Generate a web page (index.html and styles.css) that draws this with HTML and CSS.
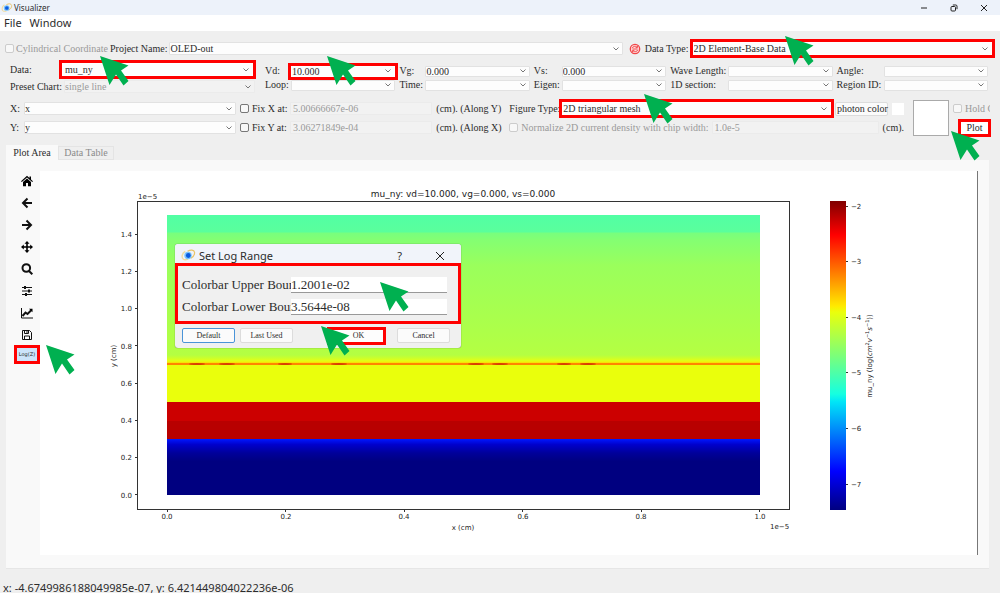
FILE: index.html
```html
<!DOCTYPE html>
<html lang="en">
<head>
<meta charset="utf-8">
<title>Visualizer</title>
<link rel="stylesheet" href="styles.css">
</head>
<body>
<svg class="defs" aria-hidden="true">
  <symbol id="arrow" viewBox="0 0 29 30"><path d="M0 0 28.500 9.500 21 14.500 28.500 25 23.500 29.500 16 18.500 9.500 29Z" fill="#00b050"/></symbol>
  <symbol id="logo" viewBox="0 0 16 14">
    <path d="M4.500 2.500C1 4.500 0 9 2.500 11c1.500 1 3.500.5 5-.2" fill="none" stroke="#f0dca0" stroke-width="1.500"/>
    <path d="M7 2.500c3-2 7-2 7.500 1 .3 2.500-1.500 5-4 6.500" fill="none" stroke="#e9c46a" stroke-width="1.300"/>
    <circle cx="7.500" cy="7" r="4" fill="#7cc4fa"/><circle cx="7.800" cy="7" r="2.600" fill="#0b5be0"/>
  </symbol>
</svg>

<header class="titlebar">
  <svg class="logo"><use href="#logo"/></svg>
  <span class="app-name">Visualizer</span>
  <div class="window-controls">
    <button aria-label="Minimize"><svg viewBox="0 0 8 8"><path d="M1 4h6"/></svg></button>
    <button aria-label="Restore"><svg viewBox="0 0 8 8"><rect x="1" y="2.500" width="4.500" height="4.500" rx="1"/><path d="M2.800 1h3q1.200 0 1.200 1.200v3"/></svg></button>
    <button aria-label="Close"><svg viewBox="0 0 8 8"><path d="M1 1l6 6M7 1 1 7"/></svg></button>
  </div>
</header>
<nav class="menubar"><button>File</button><button>Window</button></nav>

<form class="controls">
  <div class="row project-row">
    <label class="check muted anchor"><input type="checkbox" disabled>Cylindrical Coordinate<svg class="arrow a-data"><use href="#arrow"/></svg></label>
    <label for="project">Project Name:</label>
    <select id="project" class="field project"><option>OLED-out</option></select>
    <button type="button" class="refresh" aria-label="Refresh"><svg viewBox="0 0 12 12"><circle cx="6" cy="6" r="4.700" fill="#ffd9d9" stroke="#f0474a" stroke-width="1.300"/><path d="M3.200 5.200C3.700 3.300 6.500 2.700 8 4.100M8.500 2.700v1.900H6.600M8.800 6.800C8.300 8.700 5.500 9.300 4 7.900M3.500 9.300V7.400h1.900M3.500 6h5" fill="none" stroke="#f0474a" stroke-width=".9"/></svg></button>
    <label for="dtype">Data Type:</label>
    <div class="anchor dtype"><select id="dtype" class="field marked"><option>2D Element-Base Data</option></select><svg class="arrow a-dtype"><use href="#arrow"/></svg></div>
  </div>

  <div class="params">
    <div class="source">
      <label for="data">Data:</label>
      <select id="data" class="field marked inset"><option>mu_ny</option></select>
      <label for="preset">Preset Chart:</label>
      <select id="preset" class="field" disabled><option>single line</option></select>
    </div>
    <div class="bias">
      <label for="vd">Vd:</label><div class="anchor"><select id="vd" class="field marked"><option>10.000</option></select><svg class="arrow a-vd"><use href="#arrow"/></svg></div>
      <label for="vg">Vg:</label><select id="vg" class="field"><option>0.000</option></select>
      <label for="vs">Vs:</label><select id="vs" class="field"><option>0.000</option></select>
      <label for="wave">Wave Length:</label><select id="wave" class="field"><option></option></select>
      <label for="angle">Angle:</label><select id="angle" class="field"><option></option></select>
      <label for="loop">Loop:</label><select id="loop" class="field"><option></option></select>
      <label for="time">Time:</label><select id="time" class="field"><option></option></select>
      <label for="eigen">Eigen:</label><select id="eigen" class="field"><option></option></select>
      <label for="section">1D section:</label><select id="section" class="field"><option></option></select>
      <label for="region">Region ID:</label><select id="region" class="field"><option></option></select>
    </div>
  </div>

  <div class="axes">
    <div class="axis-grid">
      <label for="xaxis">X:</label><select id="xaxis" class="field"><option>x</option></select>
      <label class="check"><input type="checkbox">Fix X at:</label>
      <input class="field" aria-label="Fixed X" value="5.00666667e-06" disabled><span>(cm). (Along Y)</span>
      <label for="yaxis">Y:</label><select id="yaxis" class="field"><option>y</option></select>
      <label class="check"><input type="checkbox">Fix Y at:</label>
      <input class="field" aria-label="Fixed Y" value="3.06271849e-04" disabled><span>(cm). (Along X)</span>
    </div>
    <div class="figure-opts">
      <div class="opt-row">
        <label for="ftype" class="ftype-label">Figure Type:</label>
        <div class="anchor grow"><select id="ftype" class="field marked"><option>2D triangular mesh</option></select><svg class="arrow a-ftype"><use href="#arrow"/></svg></div>
        <button type="button" class="btn photon">photon color</button><span class="swatch"></span>
      </div>
      <div class="opt-row">
        <label class="check muted"><input type="checkbox" disabled>Normalize 2D current density with chip width:</label>
        <input class="field grow" aria-label="Chip width" value="1.0e-5" disabled><span class="unit">(cm).</span>
      </div>
    </div>
    <div class="preview"></div>
    <div class="actions">
      <div class="hold"><label class="check muted"><input type="checkbox" disabled>Hold Chart</label></div>
      <div class="anchor plot-wrap"><button type="button" class="plot">Plot</button><svg class="arrow a-plot"><use href="#arrow"/></svg></div>
    </div>
  </div>
</form>

<main class="workspace">
  <div class="tabs" role="tablist"><button role="tab" aria-selected="true">Plot Area</button><button role="tab" aria-selected="false">Data Table</button></div>
  <section class="pane">
    <div class="tools">
      <button aria-label="Home"><svg viewBox="0 0 12 12"><path d="M6 .8 0 6.200l.8.9L6 2.600l5.200 4.500.8-.9-2-1.800V1.500H8.500v1.500ZM2 7v4.200h3V8h2v3.200h3V7L6 3.600Z"/></svg></button>
      <button aria-label="Back"><svg viewBox="0 0 12 12"><path d="M6.500 1.500 2 6l4.500 4.500M2.500 6H11" class="heavy"/></svg></button>
      <button aria-label="Forward"><svg viewBox="0 0 12 12"><path d="M5.500 1.500 10 6l-4.500 4.500M9.500 6H1" class="heavy"/></svg></button>
      <button aria-label="Pan"><svg viewBox="0 0 12 12"><path d="M6 0 8.500 2.800H6.800v2.400h2.400V3.500L12 6 9.200 8.500V6.800H6.800v2.400h1.700L6 12 3.500 9.200h1.700V6.800H2.800v1.700L0 6l2.800-2.500v1.700h2.400V2.800H3.500Z"/></svg></button>
      <button aria-label="Zoom"><svg viewBox="0 0 12 12"><circle cx="5.300" cy="5" r="3.800" class="line"/><path d="m8 8 3.300 3.300" class="heavy"/></svg></button>
      <button aria-label="Subplots"><svg viewBox="0 0 12 12"><path d="M1 2.500h10M1 6h10M1 9.500h10" class="thin"/><path d="M4 1v3M8 4.500v3M5 8v3" class="heavy"/></svg></button>
      <button aria-label="Axes"><svg viewBox="0 0 12 12"><path d="M.5 1v10H12" class="thin"/><path d="M1.500 9 4.500 5.500 6.500 7 10.500 3" class="line"/><path d="M8 1.800h3.500v3.500Z"/></svg></button>
      <button aria-label="Save"><svg viewBox="0 0 12 12"><path d="M1.500 1.500h7l2 2v7h-9ZM3.500 10.500V7h5v3.500M3.500 1.500v3h4v-3M6 2v2" class="thin"/></svg></button>
      <div class="anchor log-wrap"><button class="log">Log(Z)</button><svg class="arrow a-log"><use href="#arrow"/></svg></div>
    </div>

    <div class="canvas">
      <svg class="chart" viewBox="40 171 938 384" role="img" aria-label="mu_ny mobility map">
        <defs>
          <linearGradient id="map" x1="0" y1="215" x2="0" y2="495" gradientUnits="userSpaceOnUse">
            <stop offset="0" stop-color="#52ffa4"/><stop offset=".06" stop-color="#5aff9c"/><stop offset=".065" stop-color="#78ff7e"/>
            <stop offset=".09" stop-color="#84ff72"/><stop offset=".18" stop-color="#9aff5c"/><stop offset=".35" stop-color="#a8ff4e"/><stop offset=".5" stop-color="#b4ff42"/>
            <stop offset=".51" stop-color="#c8ff2e"/><stop offset=".522" stop-color="#e8ff10"/><stop offset=".53" stop-color="#ffd000"/>
            <stop offset=".53" stop-color="#ff8400"/><stop offset=".537" stop-color="#ff8400"/>
            <stop offset=".537" stop-color="#eaff0c"/><stop offset=".667" stop-color="#eaff0c"/>
            <stop offset=".667" stop-color="#cc0000"/><stop offset=".735" stop-color="#cc0000"/>
            <stop offset=".735" stop-color="#b80000"/><stop offset=".8" stop-color="#b80000"/>
            <stop offset=".8" stop-color="#0018ff"/><stop offset=".82" stop-color="#0000cc"/><stop offset=".85" stop-color="#00009a"/><stop offset=".88" stop-color="#000080"/><stop offset="1" stop-color="#000080"/>
          </linearGradient>
          <linearGradient id="jet" x1="0" y1="0" x2="0" y2="1">
            <stop offset="0" stop-color="#800000"/><stop offset=".11" stop-color="#ff0000"/><stop offset=".34" stop-color="#ffea00"/><stop offset=".36" stop-color="#eaff0c"/>
            <stop offset=".5" stop-color="#7cff79"/><stop offset=".625" stop-color="#15ffe1"/><stop offset=".65" stop-color="#00e5f7"/><stop offset=".875" stop-color="#0000ff"/><stop offset="1" stop-color="#000080"/>
          </linearGradient>
        </defs>
        <rect x="167" y="215" width="593" height="280" fill="url(#map)"/>
        <g fill="#d84000">
          <ellipse cx="197" cy="364" rx="8" ry="1"/><ellipse cx="227" cy="364" rx="8" ry="1"/><ellipse cx="285" cy="364" rx="7" ry="1"/><ellipse cx="339" cy="364" rx="8" ry="1"/><ellipse cx="476" cy="364" rx="8" ry="1"/><ellipse cx="500" cy="364" rx="8" ry="1"/><ellipse cx="564" cy="364" rx="7" ry="1"/><ellipse cx="588" cy="364" rx="8" ry="1"/>
        </g>
        <rect x="830" y="201" width="16" height="309" fill="url(#jet)"/>
        <g class="axis">
          <rect x="137.500" y="201.500" width="652" height="308"/>
          <path d="M135 494.500h2M135 457.500h2M135 420.500h2M135 383.500h2M135 345.500h2M135 308.500h2M135 271.500h2M135 234.500h2"/>
          <path d="M167.500 510v2M285.500 510v2M404.500 510v2M522.500 510v2M641.500 510v2M759.500 510v2"/>
          <path d="M846 206.500h2M846 261.500h2M846 317.500h2M846 372.500h2M846 428.500h2M846 484.500h2"/>
          <path d="M977.500 171v384" class="edge"/>
        </g>
        <g class="tick end"><text x="132" y="498">0.0</text><text x="132" y="460">0.2</text><text x="132" y="423">0.4</text><text x="132" y="386">0.6</text><text x="132" y="349">0.8</text><text x="132" y="311">1.0</text><text x="132" y="274">1.2</text><text x="132" y="237">1.4</text></g>
        <g class="tick mid"><text x="167" y="519">0.0</text><text x="286" y="519">0.2</text><text x="404" y="519">0.4</text><text x="523" y="519">0.6</text><text x="641" y="519">0.8</text><text x="760" y="519">1.0</text><text x="463" y="530">x (cm)</text><text transform="translate(116 356) rotate(-90)">y (cm)</text></g>
        <g class="tick"><text x="138" y="199">1e−5</text><text x="770" y="529">1e−5</text>
          <text x="851" y="209">−2</text><text x="851" y="264">−3</text><text x="851" y="320">−4</text><text x="851" y="375">−5</text><text x="851" y="431">−6</text><text x="851" y="487">−7</text></g>
        <text class="tick mid" transform="translate(872 356) rotate(-90)">mu_ny (log(<tspan class="it">cm</tspan><tspan class="sup">2</tspan><tspan class="it">v</tspan><tspan class="sup">−1</tspan><tspan class="it">s</tspan><tspan class="sup">−1</tspan>))</text>
        <text class="plot-title" x="463" y="197">mu_ny: vd=10.000, vg=0.000, vs=0.000</text>
      </svg>

      <form class="dialog" role="dialog" aria-label="Set Log Range">
        <div class="dialog-title"><svg class="logo"><use href="#logo"/></svg><span>Set Log Range</span><button type="button" class="help">?</button><button type="button" aria-label="Close"><svg viewBox="0 0 8 8"><path d="M0 0l8 8M8 0 0 8"/></svg></button></div>
        <div class="bounds">
          <label for="upper">Colorbar Upper Bound</label><div class="anchor"><input id="upper" value="1.2001e-02"><svg class="arrow a-upper"><use href="#arrow"/></svg></div>
          <label for="lower">Colorbar Lower Bound</label><input id="lower" value="3.5644e-08">
        </div>
        <div class="dialog-buttons">
          <button type="button" class="btn default">Default</button><button type="button" class="btn">Last Used</button>
          <div class="anchor ok-wrap"><button type="button" class="ok">OK</button><svg class="arrow a-ok"><use href="#arrow"/></svg></div>
          <button type="button" class="btn">Cancel</button>
        </div>
      </form>
    </div>
  </section>
</main>
<footer class="status">x: -4.6749986188049985e-07, y: 6.421449804022236e-06</footer>
</body>
</html>
```
FILE: styles.css
```css
* { box-sizing: border-box; }
body {
  margin: 0; min-height: 100vh; display: flex; flex-direction: column; overflow: hidden;
  background: #efefef; color: #2c2c2c; font: 10px/12px "Liberation Serif", serif;
}
button, input, select { font: inherit; color: inherit; margin: 0; padding: 0; }
button { border: 0; background: none; }
label, span { white-space: nowrap; }
.defs { position: absolute; width: 0; height: 0; }
.anchor { position: relative; }
.arrow { position: absolute; width: 29px; height: 30px; z-index: 3; pointer-events: none; }

.titlebar { height: 15px; display: flex; align-items: center; padding-left: 1px; background: #edf2fa; font: 8px/15px "Noto Sans", sans-serif; }
.titlebar .logo { width: 12px; height: 10px; }
.app-name { padding-left: 1px; }
.window-controls { margin-left: auto; display: flex; gap: 22px; padding-right: 12px; }
.window-controls button { width: 8px; height: 8px; display: flex; }
.window-controls svg, .dialog-title button svg { width: 8px; height: 8px; fill: none; stroke: #222; stroke-width: 1; }
.menubar { height: 16px; display: flex; gap: 8px; padding-left: 4px; background: #fff; font: 11px/16px "Noto Sans", sans-serif; }

.controls { display: flex; flex-direction: column; padding: 10px 5px 0 5px; }
.row { display: flex; align-items: center; height: 15px; }
.field {
  appearance: none; display: block; width: 100%; min-width: 0; height: 13px; padding: 0 2px; border: 1px solid #e2e2e2; border-radius: 1px;
  background: #fdfdfd; font: 10px/11px "Liberation Serif", serif; color: #2c2c2c; opacity: 1;
}
select.field { padding: 0; background: #fdfdfd url("data:image/svg+xml,%3Csvg xmlns='http://www.w3.org/2000/svg' width='6' height='4'%3E%3Cpath d='M.5 .5 3 3 5.500 .5' fill='none' stroke='%23777'/%3E%3C/svg%3E") no-repeat right 3px center; }
.field:disabled { color: #9a9a9a; background-color: #f2f2f2; border-color: #ebebeb; }
select.field.marked { outline: 3px solid #f00; border-color: #fff; border-radius: 0; }
.check { display: flex; align-items: center; gap: 3px; }
.check input { appearance: none; width: 9px; height: 9px; border: 1px solid #777; border-radius: 2px; background: #f8f8f8; }
.check input:disabled { border-color: #ccc; }
.muted { color: #9a9a9a; }
.project-row > label:first-child { width: 105px; gap: 2px; }
.project { flex: 455; margin: 0 6px 0 2px; }
.refresh { width: 12px; height: 12px; margin-right: 4px; }
.refresh svg { display: block; width: 12px; height: 12px; }
.dtype { flex: 302; margin: 0 3px 0 4px; }

.params { display: flex; align-items: center; gap: 10px; padding: 5px 7px 0 5px; }
.source { flex: 245; min-width: 0; display: grid; grid-template-columns: 54px 1fr; grid-auto-rows: 17px; align-items: center; }
select.field.inset { margin-left: -2px; padding-left: 2px; }
.bias { flex: 723; min-width: 0; display: grid; grid-template-columns: 26px 1fr 30px 1fr 32px 1fr 62px 1fr 51px 1fr; grid-auto-rows: 14px; align-items: center; }
.bias > label { padding-left: 4px; }
.bias > label:nth-child(10n + 1) { padding-left: 0; }
.bias .field { height: 11px; line-height: 9px; }

.axes { display: flex; gap: 9px; padding: 4px 5px 0 5px; align-items: center; }
.axis-grid { flex: 492; min-width: 0; display: grid; grid-template-columns: 14px 213fr 54px 143fr 68px; grid-auto-rows: 19px; align-items: center; }
.axis-grid .check { padding-left: 4px; }
.axis-grid > span { padding-left: 4px; }
.figure-opts { flex: 396; min-width: 0; }
.opt-row { height: 19px; display: flex; align-items: center; }
.grow { flex: 1; }
.ftype-label { width: 53px; }
.opt-row .check { margin-right: 3px; }
.btn { height: 14px; padding: 0 1px; border: 1px solid #dcdcdc; border-radius: 2px; background: #fbfbfb; line-height: 12px; white-space: nowrap; }
.photon { width: 53px; margin: 0 4px 0 4px; }
.swatch { width: 12px; height: 12px; background: #fff; }
.unit { padding-left: 4px; }
.preview { width: 36px; height: 36px; border: 1px solid #aaa; background: #fff; }
.actions { width: 37px; margin-left: -5px; }
.hold { height: 19px; display: flex; align-items: center; overflow: hidden; }
.plot-wrap { height: 19px; padding: 4px 0 0 8px; }
.plot { display: block; width: 27px; height: 12px; background: #fff; outline: 3px solid #f00; }

.workspace { flex: 1; display: flex; flex-direction: column; padding: 8px 11px 0 6px; }
.tabs { display: flex; align-items: flex-end; }
.tabs button { height: 14px; width: 56px; border: 1px solid #e4e4e4; color: #8a8a8a; }
.tabs button[aria-selected="true"] { height: 15px; width: 52px; color: #2c2c2c; background: #f9f9f9; border-color: #f9f9f9; }
.pane { flex: 1; display: flex; padding: 11px 11px 13px 8px; background: #f9f9f9; border-bottom: 1px solid #e6e6e6; }
.tools { width: 26px; display: flex; flex-direction: column; align-items: center; gap: 10px; padding-top: 4px; }
.tools button { width: 12px; height: 12px; display: block; }
.tools button svg { display: block; width: 12px; height: 12px; }
.tools .heavy, .tools .line, .tools .thin { fill: none; stroke: #111; }
.tools .heavy { stroke-width: 2; }
.tools .line { stroke-width: 2; }
.tools .thin { stroke-width: 1; }
.log-wrap { margin-top: -3px; }
.tools button.log { width: 20px; height: 13px; background: #cce4fa; outline: 3px solid #f00; font: 5px/13px "DejaVu Sans", sans-serif; }
.canvas { flex: 1; position: relative; background: #fff; }
.chart { display: block; width: 100%; }
.axis { fill: none; stroke: #333; stroke-width: 1; }
.edge { stroke: #777; }
.tick { font: 7px "DejaVu Sans", sans-serif; fill: #222; }
.end { text-anchor: end; }
.mid { text-anchor: middle; }
.it { font-style: italic; }
.sup { font-size: 5px; baseline-shift: 3px; }
.plot-title { font: 9px "DejaVu Sans", sans-serif; fill: #222; text-anchor: middle; }

.dialog { position: absolute; left: 135px; top: 73px; width: 286px; background: #f0f0f0; border-radius: 3px; box-shadow: 0 0 1px #444; }
.dialog-title { height: 19px; display: flex; align-items: center; padding: 4px 17px 0 6px; background: #f1f4fa; border-radius: 3px 3px 0 0; font: 11px/15px "Noto Sans", sans-serif; }
.dialog-title .logo { width: 15px; height: 13px; margin-right: 3px; }
.dialog-title button { display: flex; }
.dialog-title button.help { margin: 0 34px 0 auto; }
.bounds { display: grid; grid-template-columns: 109px 1fr; grid-auto-rows: 22px; align-items: center; padding: 8px 11px 3px 4px; border: 3px solid #f00; font-size: 13px; line-height: 18px; }
.bounds label { overflow: hidden; }
.bounds input { display: block; width: 100%; height: 16px; border: 0; border-bottom: 1px solid #999; background: #fff; font-size: 13px; line-height: 16px; }
.dialog-buttons { display: flex; align-items: center; gap: 5px; height: 24px; padding: 0 11px 1px 7px; font-size: 8px; }
.dialog-buttons button { width: 53px; height: 15px; }
.dialog-buttons .default { border-color: #4a94d8; }
.ok-wrap { margin: 0 9px 0 auto; }
.dialog-buttons .ok { display: block; height: 12px; padding-left: 4px; background: #fdfdfd; outline: 3px solid #f00; }

.a-data { left: 95px; top: 13px; }
.a-dtype { left: 92px; top: -6px; }
.a-vd { left: 36px; top: -10px; }
.a-ftype { left: 82px; top: -8px; }
.a-plot { left: -2px; top: 13px; }
.a-log { left: 29px; top: -3px; }
.a-upper { left: 89px; top: 5px; }
.a-ok { left: -9px; top: -4px; }
.status { height: 25px; padding-left: 3px; font: 11px/37px "Noto Sans", sans-serif; overflow: hidden; }
```
